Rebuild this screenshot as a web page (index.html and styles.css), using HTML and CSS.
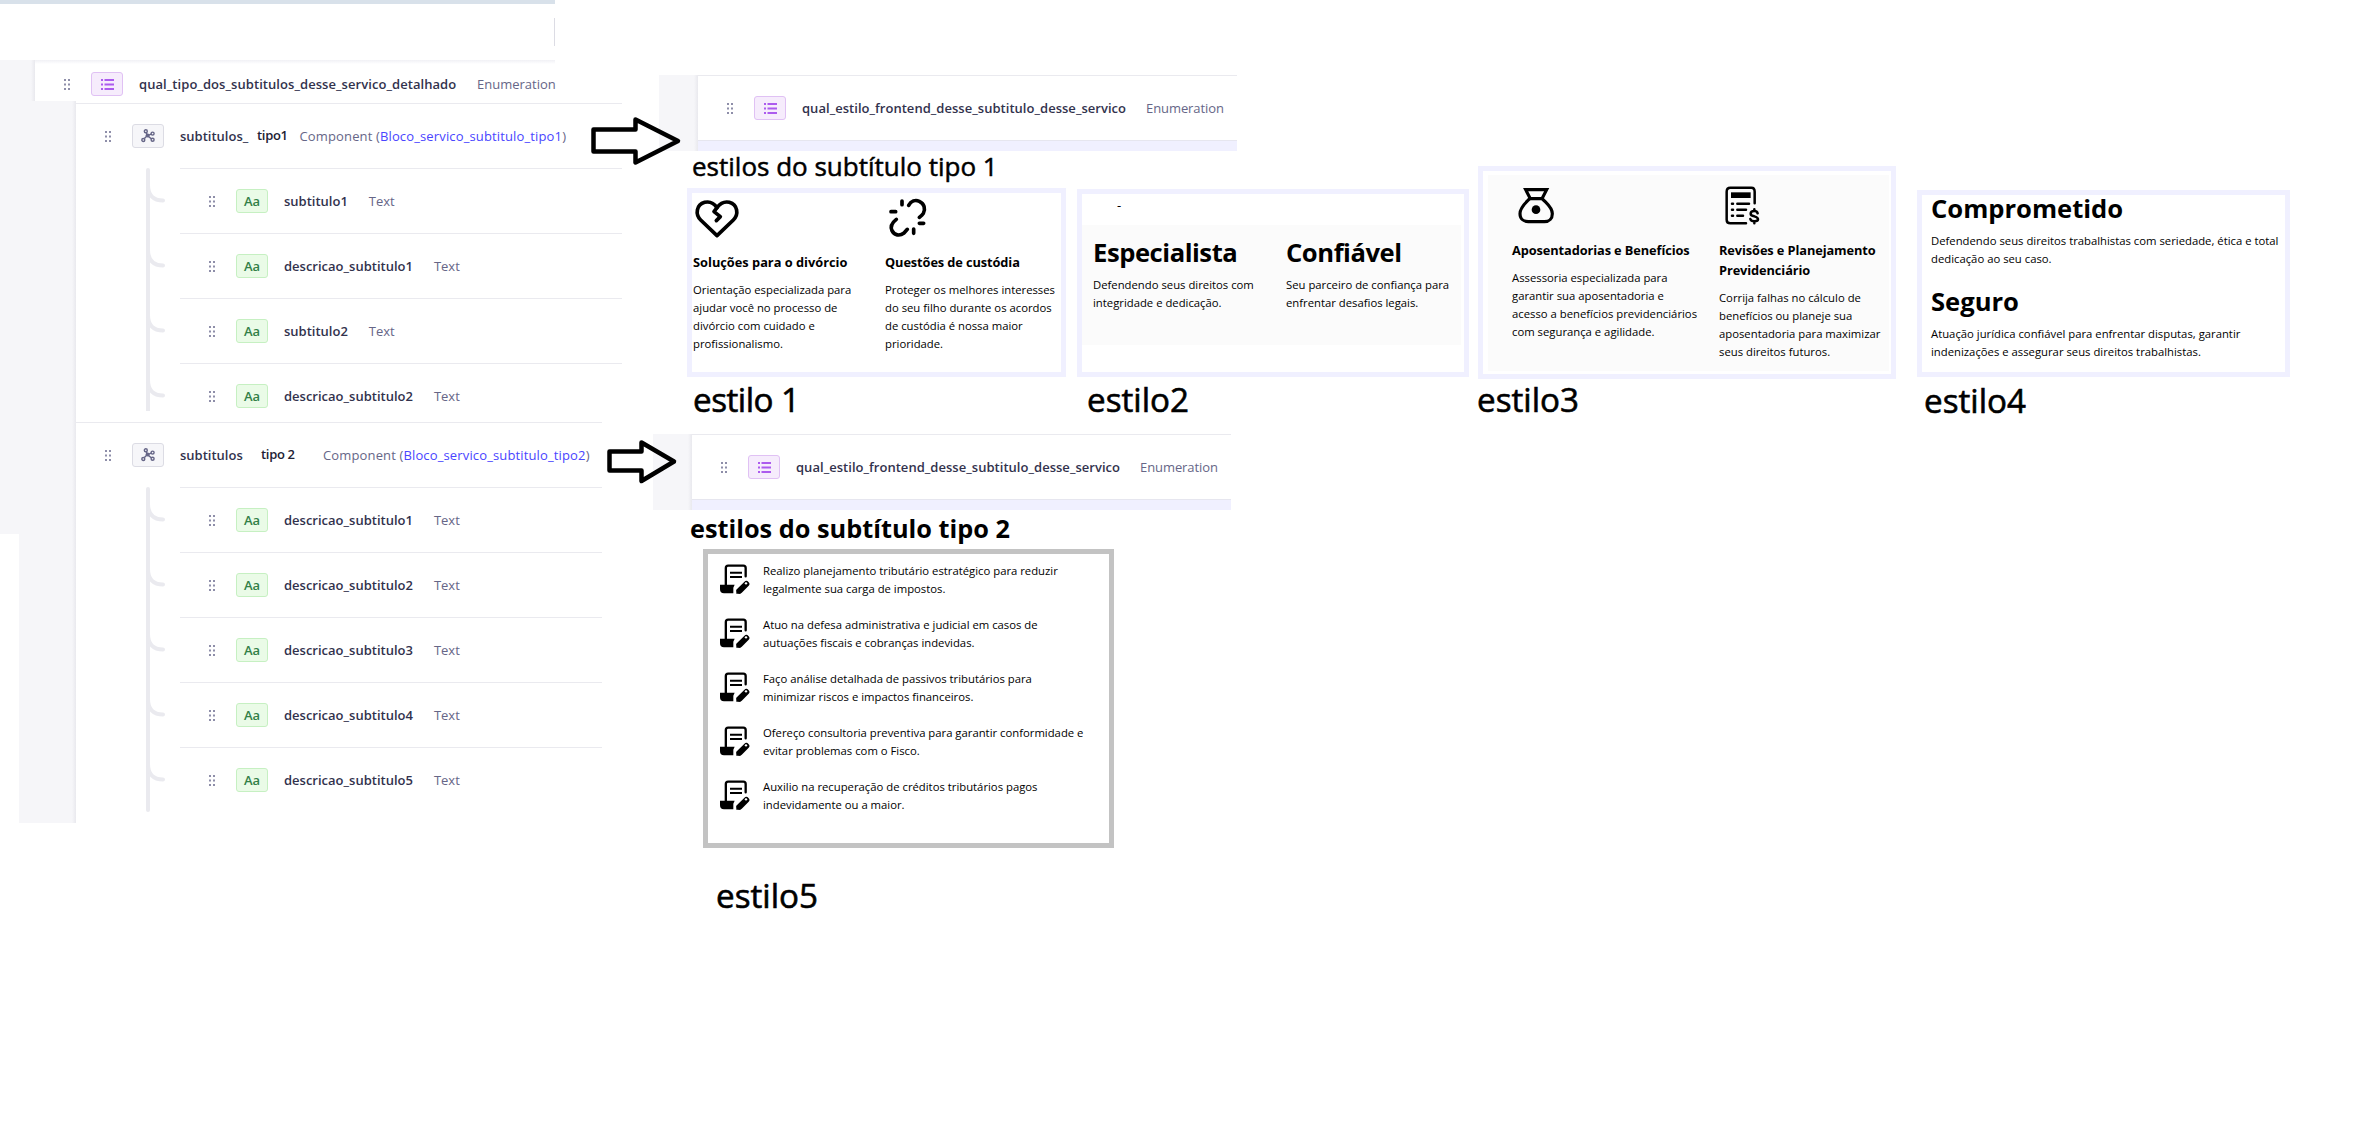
FILE: index.html
```html
<!DOCTYPE html>
<html lang="pt-BR">
<head>
<meta charset="utf-8">
<title>Estilos dos subtítulos</title>
<link rel="stylesheet" href="styles.css">
</head>
<body>
<svg class="defs" aria-hidden="true">
  <symbol id="grip" viewBox="0 0 6 11"><path d="M0 0h2v2H0zM4 0h2v2H4zM0 4.5h2v2H0zM4 4.5h2v2H4zM0 9h2v2H0zM4 9h2v2H4z"/></symbol>
  <symbol id="list" viewBox="0 0 13 11"><path d="M0 0h2v2H0zM3.5 0H13v2H3.5zM0 4.5h2v2H0zM3.5 4.5H13v2H3.5zM0 9h2v2H0zM3.5 9H13v2H3.5z"/></symbol>
  <symbol id="nodes" viewBox="0 0 14 14"><g fill="none" stroke="currentColor" stroke-width="1.4"><path d="M5.2 3.6 6.4 6.6 10.2 5.2M6.4 6.6 3.4 9.6M6.4 6.6 10.3 9.8"/><circle cx="4.8" cy="2.2" r="1.5"/><circle cx="11.6" cy="4.6" r="1.5"/><circle cx="11.6" cy="10.8" r="1.5"/><circle cx="2.3" cy="11" r="1.5"/></g><circle cx="6.6" cy="6.6" r="2"/></symbol>
  <symbol id="branch" viewBox="0 0 19 22"><path d="M2 0v3c0 10 5.500 15.500 15 15.500" fill="none" stroke="currentColor" stroke-width="4" stroke-linecap="round"/></symbol>
  <symbol id="scroll" viewBox="0 0 90 90"><path d="M17.500 64V12q0-7 7-7H70q7 0 7 7V37" fill="none" stroke="currentColor" stroke-width="7" stroke-linecap="round"/><path d="M30 26H66M30 39H66" stroke="currentColor" stroke-width="6"/><path d="M0 62H44L40 71V88H12Q0 88 0 76Z"/><path d="M59 80 79 60" stroke="currentColor" stroke-width="18" stroke-linecap="round"/><path d="M49 76V89H62Z"/><circle cx="78" cy="58" r="3.500" fill="#fff"/></symbol>
</svg>

<main class="board">

  <section class="fragment frag-top">
    <div class="topbar"></div>
    <div class="header"><span class="header-divider"></span></div>
    <div class="split">
      <div class="gutter gutter-narrow"></div>
      <div class="field field-enum">
        <svg class="grip"><use href="#grip"/></svg><span class="badge badge-enum"><svg class="i-list"><use href="#list"/></svg></span>
        <span class="name">qual_tipo_dos_subtitulos_desse_servico_detalhado</span><span class="type">Enumeration</span>
      </div>
    </div>
  </section>

  <section class="fragment frag-tipo1">
    <div class="gutter gutter-wide"></div>
    <div class="panel">
      <div class="field field-component">
        <svg class="grip"><use href="#grip"/></svg><span class="badge badge-component"><svg class="i-nodes"><use href="#nodes"/></svg></span>
        <span class="name name-base">subtitulos_</span><span class="name name-tag1">tipo1</span><span class="type component">Component (<a>Bloco_servico_subtitulo_tipo1</a>)</span>
      </div>
      <div class="tree">
        <div class="spine"></div>
        <div class="children">
          <div class="field child"><svg class="branch"><use href="#branch"/></svg><svg class="grip"><use href="#grip"/></svg><span class="badge badge-text">Aa</span><span class="name">subtitulo1</span><span class="type">Text</span></div>
          <div class="field child"><svg class="branch"><use href="#branch"/></svg><svg class="grip"><use href="#grip"/></svg><span class="badge badge-text">Aa</span><span class="name">descricao_subtitulo1</span><span class="type">Text</span></div>
          <div class="field child"><svg class="branch"><use href="#branch"/></svg><svg class="grip"><use href="#grip"/></svg><span class="badge badge-text">Aa</span><span class="name">subtitulo2</span><span class="type">Text</span></div>
          <div class="field child"><svg class="branch"><use href="#branch"/></svg><svg class="grip"><use href="#grip"/></svg><span class="badge badge-text">Aa</span><span class="name">descricao_subtitulo2</span><span class="type">Text</span></div>
        </div>
      </div>
    </div>
  </section>

  <section class="fragment frag-tipo2">
    <div class="gutter gutter-wide gutter-notched"></div>
    <div class="panel">
      <div class="field field-component">
        <svg class="grip"><use href="#grip"/></svg><span class="badge badge-component"><svg class="i-nodes"><use href="#nodes"/></svg></span>
        <span class="name name-base">subtitulos</span><span class="name name-tag2">tipo<b>2</b></span><span class="type component">Component (<a>Bloco_servico_subtitulo_tipo2</a>)</span>
      </div>
      <div class="tree">
        <div class="spine"></div>
        <div class="children">
          <div class="field child"><svg class="branch"><use href="#branch"/></svg><svg class="grip"><use href="#grip"/></svg><span class="badge badge-text">Aa</span><span class="name">descricao_subtitulo1</span><span class="type">Text</span></div>
          <div class="field child"><svg class="branch"><use href="#branch"/></svg><svg class="grip"><use href="#grip"/></svg><span class="badge badge-text">Aa</span><span class="name">descricao_subtitulo2</span><span class="type">Text</span></div>
          <div class="field child"><svg class="branch"><use href="#branch"/></svg><svg class="grip"><use href="#grip"/></svg><span class="badge badge-text">Aa</span><span class="name">descricao_subtitulo3</span><span class="type">Text</span></div>
          <div class="field child"><svg class="branch"><use href="#branch"/></svg><svg class="grip"><use href="#grip"/></svg><span class="badge badge-text">Aa</span><span class="name">descricao_subtitulo4</span><span class="type">Text</span></div>
          <div class="field child"><svg class="branch"><use href="#branch"/></svg><svg class="grip"><use href="#grip"/></svg><span class="badge badge-text">Aa</span><span class="name">descricao_subtitulo5</span><span class="type">Text</span></div>
        </div>
      </div>
    </div>
  </section>

  <section class="fragment frag-enum1">
    <div class="gutter"></div>
    <div class="panel">
      <div class="field field-style">
        <svg class="grip"><use href="#grip"/></svg><span class="badge badge-enum"><svg class="i-list"><use href="#list"/></svg></span>
        <span class="name">qual_estilo_frontend_desse_subtitulo_desse_servico</span><span class="type">Enumeration</span>
      </div>
      <div class="band"></div>
    </div>
  </section>
  <h1 class="heading heading1">estilos do subtítulo tipo 1</h1>

  <section class="fragment frag-enum2">
    <div class="gutter"></div>
    <div class="panel">
      <div class="field field-style">
        <svg class="grip"><use href="#grip"/></svg><span class="badge badge-enum"><svg class="i-list"><use href="#list"/></svg></span>
        <span class="name">qual_estilo_frontend_desse_subtitulo_desse_servico</span><span class="type">Enumeration</span>
      </div>
      <div class="band"></div>
    </div>
  </section>
  <h1 class="heading heading2">estilos do subtítulo tipo 2</h1>

  <svg class="arrow arrow1" viewBox="0 0 94 50"><path d="M4.500 13.500H46.500V3.500L89 25 46.500 46.500V35.500H4.500Z"/></svg>
  <svg class="arrow arrow2" viewBox="0 0 74 46"><path d="M4.500 12.500H36.500V3.500L69 22.500 36.500 42V31.500H4.500Z"/></svg>

  <article class="card card1">
    <div class="col">
      <svg class="icon" viewBox="0 0 141 132"><g class="stroke11"><path d="M72 122 23 75C6 58 10 29 35 22c17-4 29 4 37 16 9-12 20-20 37-16 25 7 29 36 12 53Z"/><path d="M72 38 63 50 82 65 70 77"/></g></svg>
      <h2>Soluções para o divórcio</h2>
      <p>Orientação especializada para<br>ajudar você no processo de<br>divórcio com cuidado e<br>profissionalismo.</p>
    </div>
    <div class="col">
      <svg class="icon" viewBox="0 0 141 132"><g class="stroke11"><path d="M51 18V29M18 50H32M103 85H116M86 102V115M71 31C78 18 91 14 103 19 118 26 122 42 115 55 112 60 108 63 103 67M34 73C21 83 16 96 21 107 28 121 44 124 57 114L67 103"/></g></svg>
      <h2 class="tight">Questões de custódia</h2>
      <p>Proteger os melhores interesses<br>do seu filho durante os acordos<br>de custódia é nossa maior<br>prioridade.</p>
    </div>
  </article>
  <div class="label label1">estilo 1</div>

  <article class="card card2">
    <span class="dash">-</span>
    <div class="shade">
      <div class="col"><h3>Especialista</h3><p>Defendendo seus direitos com<br>integridade e dedicação.</p></div>
      <div class="col"><h3>Confiável</h3><p>Seu parceiro de confiança para<br>enfrentar desafios legais.</p></div>
    </div>
  </article>
  <div class="label label2">estilo2</div>

  <article class="card card3">
    <div class="shade">
      <div class="col">
        <svg class="icon" viewBox="0 0 141 132"><g class="stroke10"><path d="M41 20H104L90 47H55Z"/><path d="M53 47C41 60 24 72 24 92 24 108 36 116 49 116H97C112 116 121 106 121 92 121 72 102 60 91 47"/></g><circle cx="72" cy="80" r="13"/></svg>
        <h2 class="tight">Aposentadorias e Benefícios</h2>
        <p>Assessoria especializada para<br>garantir sua aposentadoria e<br>acesso a benefícios previdenciários<br>com segurança e agilidade.</p>
      </div>
      <div class="col">
        <svg class="icon" viewBox="0 0 141 132"><g class="stroke8"><path d="M81 121H34Q23 121 23 110V26Q23 14 34 14H97Q107 14 107 26V61"/><path d="M39 62H42M55 62H90M39 80H42M55 80H81M39 98H42M55 98H72"/></g><path d="M36 28H95V45H36Z"/><g class="stroke8"><path d="M116 91Q114 84 106 84 95 84 95 92 95 98 106 100 117 103 117 109 117 115 106 115 96 115 94 108M106 79V84M106 115V121"/></g></svg>
        <h2 class="tight">Revisões e Planejamento<br>Previdenciário</h2>
        <p>Corrija falhas no cálculo de<br>benefícios ou planeje sua<br>aposentadoria para maximizar<br>seus direitos futuros.</p>
      </div>
    </div>
  </article>
  <div class="label label3">estilo3</div>

  <article class="card card4">
    <h3>Comprometido</h3>
    <p>Defendendo seus direitos trabalhistas com seriedade, ética e total<br>dedicação ao seu caso.</p>
    <h3>Seguro</h3>
    <p>Atuação jurídica confiável para enfrentar disputas, garantir<br>indenizações e assegurar seus direitos trabalhistas.</p>
  </article>
  <div class="label label4">estilo4</div>

  <article class="card card5">
    <div class="item"><svg><use href="#scroll"/></svg><p>Realizo planejamento tributário estratégico para reduzir<br>legalmente sua carga de impostos.</p></div>
    <div class="item"><svg><use href="#scroll"/></svg><p>Atuo na defesa administrativa e judicial em casos de<br>autuações fiscais e cobranças indevidas.</p></div>
    <div class="item"><svg><use href="#scroll"/></svg><p>Faço análise detalhada de passivos tributários para<br>minimizar riscos e impactos financeiros.</p></div>
    <div class="item"><svg><use href="#scroll"/></svg><p>Ofereço consultoria preventiva para garantir conformidade e<br>evitar problemas com o Fisco.</p></div>
    <div class="item"><svg><use href="#scroll"/></svg><p>Auxilio na recuperação de créditos tributários pagos<br>indevidamente ou a maior.</p></div>
  </article>
  <div class="label label5">estilo5</div>

</main>
</body>
</html>
```

FILE: styles.css
```css
* { box-sizing: border-box; }
body { margin: 0; background: #fff; color: #000; font-family: "Open Sans", "Noto Sans", sans-serif; }
h1, h2, h3, p { margin: 0; }
svg { display: block; flex: none; fill: currentColor; }
.defs { position: absolute; width: 0; height: 0; }

/* Free canvas: every pasted piece has its own place on the board */
.board { position: relative; width: 2354px; height: 1138px; overflow: hidden; white-space: nowrap; }
.fragment, .heading, .arrow, .card, .label { position: absolute; }

/* Field list fragments */
.fragment { display: flex; font-size: 13px; line-height: 20px; }
.frag-top { left: 0; top: 0; width: 555px; height: 101px; flex-direction: column; z-index: 1; }
.frag-tipo1 { left: 0; top: 101px; width: 622px; height: 321px; }
.frag-tipo2 { left: 0; top: 422px; width: 602px; height: 401px; }
.frag-enum1 { left: 659px; top: 75px; width: 578px; height: 76px; }
.frag-enum2 { left: 653px; top: 434px; width: 578px; height: 76px; }

.topbar { height: 4px; background: #d8e1ea; }
.header { height: 56px; display: flex; justify-content: flex-end; padding: 14px 0 14px; }
.header-divider { width: 1px; background: #dcdce4; }
.split { display: flex; height: 41px; background: linear-gradient(#f1f1f5, #fff 4px); }

.gutter { width: 39px; flex: none; background: linear-gradient(90deg, transparent calc(100% - 4px), #e9e9ee), #f6f6f9; }
.gutter-narrow { width: 35px; }
.gutter-wide { width: 76px; }
.gutter-notched { clip-path: polygon(0 0, 100% 0, 100% 100%, 19px 100%, 19px 112px, 0 112px); }
.panel { flex: 1; display: flex; flex-direction: column; }

.field { display: flex; flex: none; align-items: center; height: 65px; border-top: 1px solid #eaeaef; }
.field .grip { width: 6px; height: 11px; color: #8e8ea9; margin-right: 21px; }
.field-enum { height: 48px; border: 0; padding-left: 29px; }
.field-component { padding-left: 29px; }
.frag-tipo1 .field-component { margin-top: 2px; }
.field-style { padding-left: 29px; }
.band { flex: 1; border-top: 1px solid #e6e6ef; background: #f0f0ff; }

.badge { width: 32px; height: 24px; flex: none; display: flex; align-items: center; justify-content: center; border: 1px solid; border-radius: 3px; margin-right: 16px; }
.badge-enum { background: #f6ecfc; border-color: #e0c1f4; color: #ac5bee; }
.badge-component { background: #f6f6f9; border-color: #dcdce4; color: #666687; }
.badge-text { background: #eafbe7; border-color: #c6f0c2; color: #328048; font-weight: 600; font-size: 13px; }
.i-list { width: 13px; height: 11px; }
.i-nodes { width: 14px; height: 14px; }

.name { font-weight: 600; color: #32324d; margin-right: 21px; }
.field-enum .name { width: 317px; letter-spacing: 0.06px; }
.field-style .name { width: 323px; letter-spacing: 0.03px; }
.type { color: #666687; }
.field-style .type { letter-spacing: -0.08px; }
.component { letter-spacing: 0.14px; }
.type a { color: #4945ff; }
.name-base { width: 77px; margin: 0; }
.name-tag1 { width: 42.500px; margin: 0 0 2px; color: #212134; letter-spacing: -0.3px; }
.name-tag2 { width: 62px; margin: 0 0 2px 4px; color: #212134; letter-spacing: -0.3px; }
.name-tag2 b { margin-left: 3px; font-weight: 600; }

.tree { display: flex; flex: 1; }
.spine { width: 4px; margin-left: 70px; background: #eaeaef; border-radius: 2px; }
.frag-tipo1 .spine { height: 243px; border-radius: 2px 2px 0 0; }
.frag-tipo2 .spine { height: 325px; }
.children { flex: 1; }
.child { margin-left: 30px; border-top: 1px solid #eaeaef; }
.child .branch { width: 19px; height: 22px; margin: -16px 44px 0 -34px; color: #eaeaef; }

/* Annotations */
.heading { font-size: 26px; line-height: 24px; }
.heading1 { left: 692px; top: 154px; font-weight: 500; -webkit-text-stroke: 0.5px #000; }
.heading2 { left: 690px; top: 516px; font-size: 25.300px; font-weight: 700; }
.label { font-size: 33.200px; line-height: 40px; font-weight: 500; -webkit-text-stroke: 0.6px #000; }
.label1 { left: 693px; top: 380px; letter-spacing: -0.5px; }
.label2 { left: 1087px; top: 380px; }
.label3 { left: 1477px; top: 380px; }
.label4 { left: 1924px; top: 381px; }
.label5 { left: 716px; top: 876px; }
.arrow { fill: none; stroke: #000; stroke-width: 4.500; stroke-linejoin: round; z-index: 2; }
.arrow1 { left: 589px; top: 116px; width: 94px; height: 50px; }
.arrow2 { left: 605px; top: 439px; width: 74px; height: 46px; }

/* Style samples */
.card { border: 5px solid #f0f0ff; background: #fff; }
.card p { font-size: 11.300px; line-height: 18px; }
.card h2 { font-size: 12.800px; line-height: 20px; font-weight: 700; }
.card h3 { font-size: 25.600px; line-height: 26px; font-weight: 700; }
.card .icon { width: 47px; height: 44px; }
.stroke11, .stroke10, .stroke8 { fill: none; stroke: currentColor; stroke-linecap: round; }
.stroke11 { stroke-width: 11; stroke-linejoin: round; }
.stroke10 { stroke-width: 9.500; stroke-linecap: butt; }
.stroke8 { stroke-width: 7.500; }
.shade { display: flex; background: #fbfbfb; }
.col { flex: none; }

.card1 { left: 687px; top: 188px; width: 379px; height: 189px; display: flex; padding: 2px 0 0 1px; }
.card1 .col { width: 192px; }
.card1 h2 { margin: 13px 0 9px; }
.card h2.tight { letter-spacing: -0.1px; }

.card2 { left: 1077px; top: 189px; width: 392px; height: 188px; }
.card2 .dash { display: block; height: 31px; padding: 2px 0 0 35px; font-size: 13px; line-height: 18px; }
.card2 .shade { width: 379px; height: 120px; padding: 15px 0 0 11px; }
.card2 .col { width: 193px; }
.card2 h3 { margin-bottom: 10px; letter-spacing: -0.45px; }

.card3 { left: 1478px; top: 166px; width: 418px; height: 213px; padding: 4px 2px 4px 5px; }
.card3 .shade { height: 196px; padding: 8px 0 0 24px; }
.card3 .col { width: 207px; }
.card3 h2 { margin: 13px 0 9px; }

.card4 { left: 1917px; top: 190px; width: 373px; height: 187px; padding: 1px 0 0 9px; }
.card4 h3 { margin-bottom: 10px; }
.card4 p { margin-bottom: 21px; }

.card5 { left: 703px; top: 549px; width: 411px; height: 299px; border-color: #c3c3c3; padding: 8px 0 0 12px; display: flex; flex-direction: column; gap: 18px; }
.item { display: flex; gap: 13px; }
.item svg { width: 30px; height: 30px; margin-top: 2px; }
```
